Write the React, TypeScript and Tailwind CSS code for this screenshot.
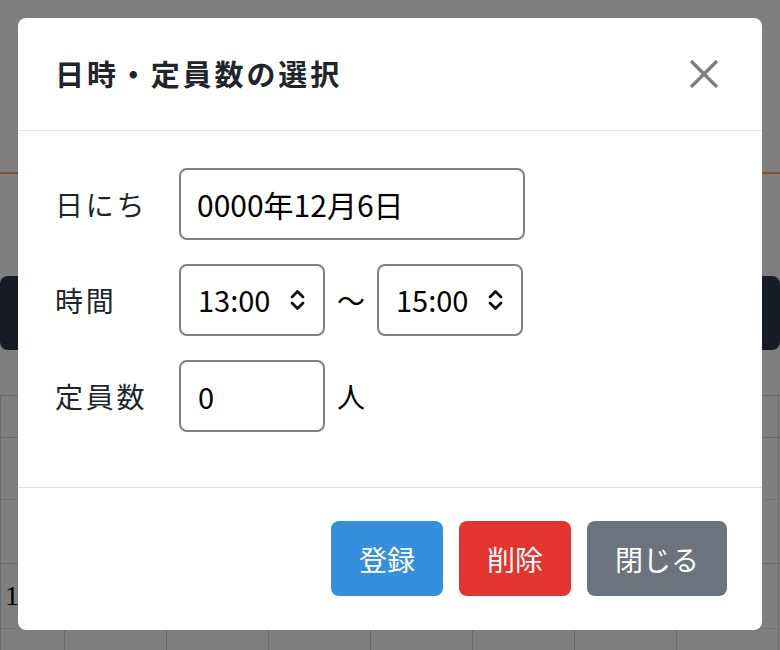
import React from "react";

const jp = "font-['Noto_Sans_CJK_JP','Noto_Sans',sans-serif]";

function Chevrons() {
  return (
    <svg
      viewBox="0 0 15 24"
      className="pointer-events-none absolute right-[20px] top-1/2 h-[24px] w-[15px] -translate-y-1/2"
      fill="none"
      stroke="#111"
      strokeWidth="2.8"
      strokeLinecap="round"
      strokeLinejoin="round"
    >
      <path d="M2 9 L7.5 3.5 L13 9" />
      <path d="M2 15 L7.5 20.5 L13 15" />
    </svg>
  );
}

function TimeSelect({ value }: { value: string }) {
  return (
    <div className="relative">
      <select
        defaultValue={value}
        className={`${jp} h-[72px] w-[146px] appearance-none rounded-lg border-2 border-[#808080] bg-white pl-[17px] text-[29px] text-black outline-none`}
      >
        {["13:00", "14:00", "15:00"].map((t) => (
          <option key={t} value={t}>
            {t}
          </option>
        ))}
      </select>
      <Chevrons />
    </div>
  );
}

const rows = [
  { h: "h-[42px]", line: "border-solid", label: "" },
  { h: "h-[62px]", line: "border-dotted", label: "" },
  { h: "h-[64px]", line: "border-solid", label: "" },
  { h: "h-[65px]", line: "border-dotted", label: "10:00" },
  { h: "h-[63px]", line: "border-solid", label: "" },
];

export default function App() {
  return (
    <div className="relative h-[650px] overflow-hidden bg-white">
      {/* page behind the dialog */}
      <div className="h-[174px] border-b-2 border-[#f6ad55]" />
      <div className="mt-[102px] h-[74px] rounded-lg bg-[#2d3748]" />
      <div className="mt-[45px] border-t border-l border-[#d4d4d4]">
        {rows.map((r, i) => (
          <div
            key={i}
            className={`grid grid-cols-[64px_repeat(7,102px)] ${r.h} border-b border-[#d4d4d4] ${r.line}`}
          >
            {Array.from({ length: 8 }).map((_, j) => (
              <div
                key={j}
                className="flex items-center border-r border-solid border-[#d4d4d4] pl-[4px] font-['Liberation_Serif',serif] text-[28px] text-black"
              >
                {j === 0 ? r.label : ""}
              </div>
            ))}
          </div>
        ))}
      </div>

      {/* overlay */}
      <div className="fixed inset-0 bg-black/50" />

      {/* dialog */}
      <div className="fixed inset-0 flex justify-center pt-[18px]">
        <div className={`${jp} w-[744px] self-start rounded-lg bg-white text-[#212529]`}>
          <div className="flex h-[113px] items-center justify-between border-b border-[#dee2e6] pl-[37px] pr-[43px]">
            <h2 className="text-[29px] font-bold tracking-[0.1em]">
              日時・定員数の選択
            </h2>
            <button className="flex h-[30px] w-[30px] items-center justify-center">
              <svg viewBox="0 0 30 30" className="h-[30px] w-[30px]" stroke="#7d7d7d" strokeWidth="3.2">
                <path d="M2 2 L28 28 M28 2 L2 28" />
              </svg>
            </button>
          </div>

          <div className="flex flex-col gap-6 px-[37px] pt-[37px] pb-[55px] text-[28px]">
            <div className="flex items-center">
              <span className="w-[124px] tracking-[0.1em]">日にち</span>
              <input
                readOnly
                value="0000年12月6日"
                className={`${jp} h-[72px] w-[346px] rounded-lg border-2 border-[#808080] px-[16px] text-[30px] text-black outline-none`}
              />
            </div>

            <div className="flex items-center">
              <span className="w-[124px] tracking-[0.1em]">時間</span>
              <div className="flex items-center gap-3">
                <TimeSelect value="13:00" />
                <span className="text-black">〜</span>
                <TimeSelect value="15:00" />
              </div>
            </div>

            <div className="flex items-center">
              <span className="w-[124px] tracking-[0.1em]">定員数</span>
              <div className="flex items-center gap-3">
                <input
                  readOnly
                  value="0"
                  className={`${jp} h-[72px] w-[146px] rounded-lg border-2 border-[#808080] px-[17px] text-[29px] text-black outline-none`}
                />
                <span className="text-black">人</span>
              </div>
            </div>
          </div>

          <div className="flex justify-end gap-4 border-t border-[#dee2e6] pt-[33px] pr-[35px] pb-[34px]">
            <button className="h-[75px] rounded-lg bg-[#3490dc] px-7 text-[28px] text-white">
              登録
            </button>
            <button className="h-[75px] rounded-lg bg-[#e3342f] px-7 text-[28px] text-white">
              削除
            </button>
            <button className="h-[75px] rounded-lg bg-[#6b737e] px-7 text-[28px] text-white">
              閉じる
            </button>
          </div>
        </div>
      </div>
    </div>
  );
}
